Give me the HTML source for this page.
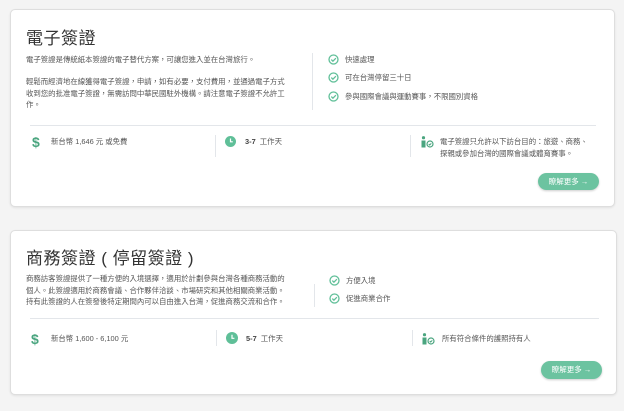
<!DOCTYPE html>
<html><head><meta charset="utf-8"><style>
*{margin:0;padding:0;box-sizing:border-box}
body{width:624px;height:411px;background:#f4f4f4;font-family:"Liberation Sans","Noto Sans CJK TC",sans-serif;color:#555;position:relative;overflow:hidden}
.card{position:absolute;background:#fff;border:1px solid #dedede;border-radius:5px;box-shadow:0 1px 2px rgba(0,0,0,.08)}
.a{position:absolute;white-space:nowrap}
.t{font-size:17px;color:#333;letter-spacing:.5px}
.p{font-size:7.4px;line-height:11.5px;color:#555}
.vd{position:absolute;width:1px;background:#e3e6ea}
.hd{position:absolute;height:1px;background:#e3e6ea}
.btn{position:absolute;background:#6cc3a0;color:#fff;border-radius:9px;font-size:7.5px;text-align:center;line-height:17px;box-shadow:0 1px 2px rgba(0,0,0,.2)}
.s{position:absolute;color:#4aa57f;font-weight:bold;font-size:14px;line-height:14px}
</style></head><body>

<div class="card" style="left:10px;top:9px;width:605px;height:198px"></div>
<div class="a t" style="left:26px;top:24px">電子簽證</div>
<div class="a p" style="left:26px;top:54px">電子簽證是傳統紙本簽證的電子替代方案，可讓您進入並在台灣旅行。</div>
<div class="a p" style="left:26px;top:76px">輕鬆而經濟地在線獲得電子簽證，申請，如有必要，支付費用，並通過電子方式<br>收到您的批准電子簽證，無需訪問中華民國駐外機構。請注意電子簽證不允許工<br>作。</div>
<div class="vd" style="left:312px;top:53px;height:57px"></div>
<svg class="a" style="left:328px;top:54px" width="11" height="50" viewBox="0 0 11 50" fill="none" stroke="#5fbf98" stroke-width="1.3"><circle cx="5.5" cy="5.5" r="4.5"/><path d="M3.3 5.6l1.6 1.6 3-3"/><circle cx="5.5" cy="23.5" r="4.5"/><path d="M3.3 23.6l1.6 1.6 3-3"/><circle cx="5.5" cy="42.5" r="4.5"/><path d="M3.3 42.6l1.6 1.6 3-3"/></svg>
<div class="a p" style="left:345px;top:54px">快速處理</div>
<div class="a p" style="left:345px;top:72px">可在台灣停留三十日</div>
<div class="a p" style="left:345px;top:91px">參與國際會議與運動賽事，不限國別資格</div>
<div class="hd" style="left:30px;top:125px;width:566px"></div>
<div class="s" style="left:32px;top:135px">$</div>
<div class="a p" style="left:51px;top:136px">新台幣 1,646 元 或免費</div>
<div class="vd" style="left:215px;top:135px;height:22px"></div>
<svg class="a" style="left:225px;top:136px" width="11" height="11"><circle cx="5.5" cy="5.5" r="5.5" fill="#5fbf98"/><path d="M5.5 2.5v3.3h2.3" stroke="#fff" stroke-width="1.2" fill="none"/></svg>
<div class="a p" style="left:245px;top:136px"><b style="color:#444">3-7</b>&nbsp; 工作天</div>
<div class="vd" style="left:410px;top:135px;height:22px"></div>
<svg class="a" style="left:420px;top:136px" width="14" height="12"><circle cx="3.5" cy="1.7" r="1.6" fill="#4aa57f"/><path d="M1.5 4.5h4v7h-4z" fill="#4aa57f"/><circle cx="10" cy="8" r="3" fill="none" stroke="#4aa57f" stroke-width="1.2"/><path d="M8.7 8l1 1 1.6-1.7" stroke="#4aa57f" stroke-width="1" fill="none"/></svg>
<div class="a p" style="left:440px;top:136px">電子簽證只允許以下訪台目的：旅遊、商務、<br>探親或參加台灣的國際會議或體育賽事。</div>
<div class="btn" style="left:538px;top:173px;width:61px;height:17px">瞭解更多 →</div>

<div class="card" style="left:10px;top:230px;width:607px;height:165px"></div>
<div class="a t" style="left:26px;top:244px">商務簽證 ( 停留簽證 )</div>
<div class="a p" style="left:26px;top:273px">商務訪客簽證提供了一種方便的入境選擇，適用於計劃參與台灣各種商務活動的<br>個人。此簽證適用於商務會議、合作夥伴洽談、市場研究和其他相關商業活動。<br>持有此簽證的人在簽發後特定期間內可以自由進入台灣，促進商務交流和合作。</div>
<div class="vd" style="left:314px;top:284px;height:23px"></div>
<svg class="a" style="left:329px;top:275px" width="11" height="30" viewBox="0 0 11 30" fill="none" stroke="#5fbf98" stroke-width="1.3"><circle cx="5.5" cy="5.5" r="4.5"/><path d="M3.3 5.6l1.6 1.6 3-3"/><circle cx="5.5" cy="23.5" r="4.5"/><path d="M3.3 23.6l1.6 1.6 3-3"/></svg>
<div class="a p" style="left:346px;top:275px">方便入境</div>
<div class="a p" style="left:346px;top:293px">促進商業合作</div>
<div class="hd" style="left:30px;top:318px;width:569px"></div>
<div class="s" style="left:31px;top:332px">$</div>
<div class="a p" style="left:51px;top:333px">新台幣 1,600 - 6,100 元</div>
<div class="vd" style="left:216px;top:330px;height:16px"></div>
<svg class="a" style="left:226px;top:332px" width="12" height="12"><circle cx="6" cy="6" r="6" fill="#5fbf98"/><path d="M6 2.8v3.5h2.4" stroke="#fff" stroke-width="1.2" fill="none"/></svg>
<div class="a p" style="left:246px;top:333px"><b style="color:#444">5-7</b>&nbsp; 工作天</div>
<div class="vd" style="left:412px;top:330px;height:16px"></div>
<svg class="a" style="left:421px;top:333px" width="14" height="12"><circle cx="3.5" cy="1.7" r="1.6" fill="#4aa57f"/><path d="M1.5 4.5h4v7h-4z" fill="#4aa57f"/><circle cx="10" cy="8" r="3" fill="none" stroke="#4aa57f" stroke-width="1.2"/><path d="M8.7 8l1 1 1.6-1.7" stroke="#4aa57f" stroke-width="1" fill="none"/></svg>
<div class="a p" style="left:442px;top:333px">所有符合條件的護照持有人</div>
<div class="btn" style="left:541px;top:361px;width:61px;height:18px">瞭解更多 →</div>
</body></html>
